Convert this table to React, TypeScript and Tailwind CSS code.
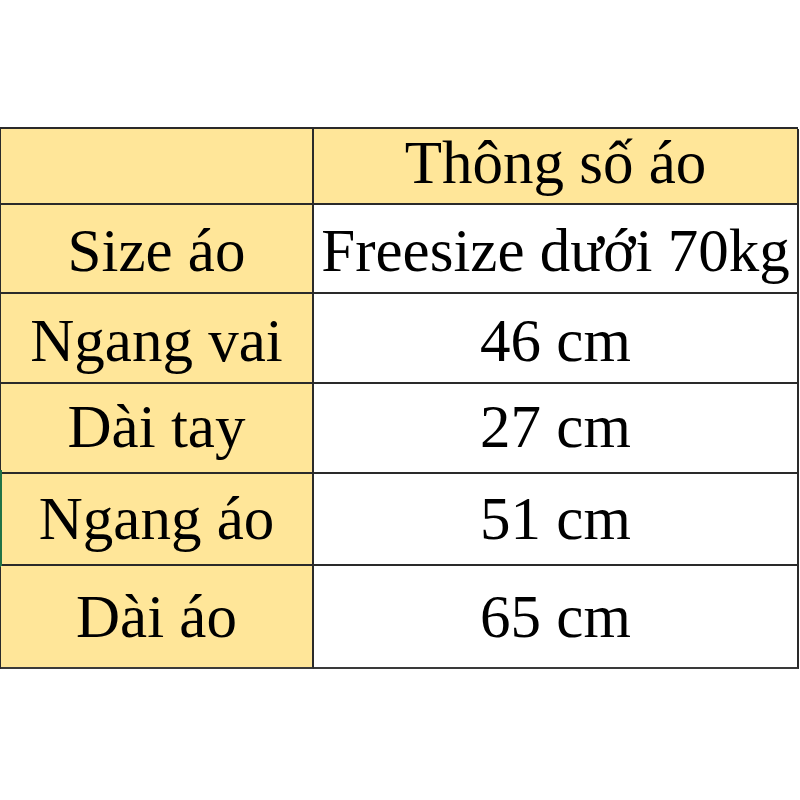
import * as React from 'react';

type Row = {
    label: string;
    value: string;
    height: string;
    pad: string;
    mark?: boolean;
};

const rows: Row[] = [
    { label: 'Size áo', value: 'Freesize dưới 70kg', height: 'h-[89px]', pad: 'pb-[11px]' },
    { label: 'Ngang vai', value: '46 cm', height: 'h-[90px]', pad: 'pb-[11px]' },
    { label: 'Dài tay', value: '27 cm', height: 'h-[90px]', pad: 'pb-[15px]' },
    { label: 'Ngang áo', value: '51 cm', height: 'h-[92px]', pad: 'pb-[15px]', mark: true },
    { label: 'Dài áo', value: '65 cm', height: 'h-[103px]', pad: 'pb-[20px]' },
];

export default function App() {
    return (
        <div
            className="w-[800px] h-[800px] bg-white pt-[127px] text-black"
            style={{ fontFamily: '"Liberation Serif", "Times New Roman", serif' }}
        >
            <div className="w-[798px] border-t-2 border-l border-[#2a2a2a] grid grid-cols-[313px_485px] text-[61px] leading-none">
                {/* header */}
                <div className="h-[76px] bg-[#ffe699] border-r-2 border-b-2 border-[#2a2a2a]" />
                <div className="h-[76px] bg-[#ffe699] border-r-2 border-b-2 border-[#2a2a2a] flex items-end justify-center pb-[10px]">
                    Thông số áo
                </div>

                {rows.map((row, idx) => {
                    const last = idx === rows.length - 1;
                    return (
                        <React.Fragment key={row.label}>
                            <div
                                className={
                                    'relative bg-[#ffe699] border-r-2 border-b-2 border-[#2a2a2a] flex items-end justify-center ' +
                                    row.height + ' ' + row.pad + ' ' +
                                    (last ? 'border-b-[#3a3a3a]' : '')
                                }
                            >
                                {row.mark && (
                                    <span className="absolute left-[-1px] top-[-4px] bottom-[-3px] w-[2px] bg-[#217346]" />
                                )}
                                {row.label}
                            </div>
                            <div
                                className={
                                    'bg-white border-r-2 border-b-2 border-[#2a2a2a] flex items-end justify-center ' +
                                    row.height + ' ' + row.pad + ' ' +
                                    (last ? 'border-b-[#3a3a3a]' : '')
                                }
                            >
                                {row.value}
                            </div>
                        </React.Fragment>
                    );
                })}
            </div>
        </div>
    );
}
